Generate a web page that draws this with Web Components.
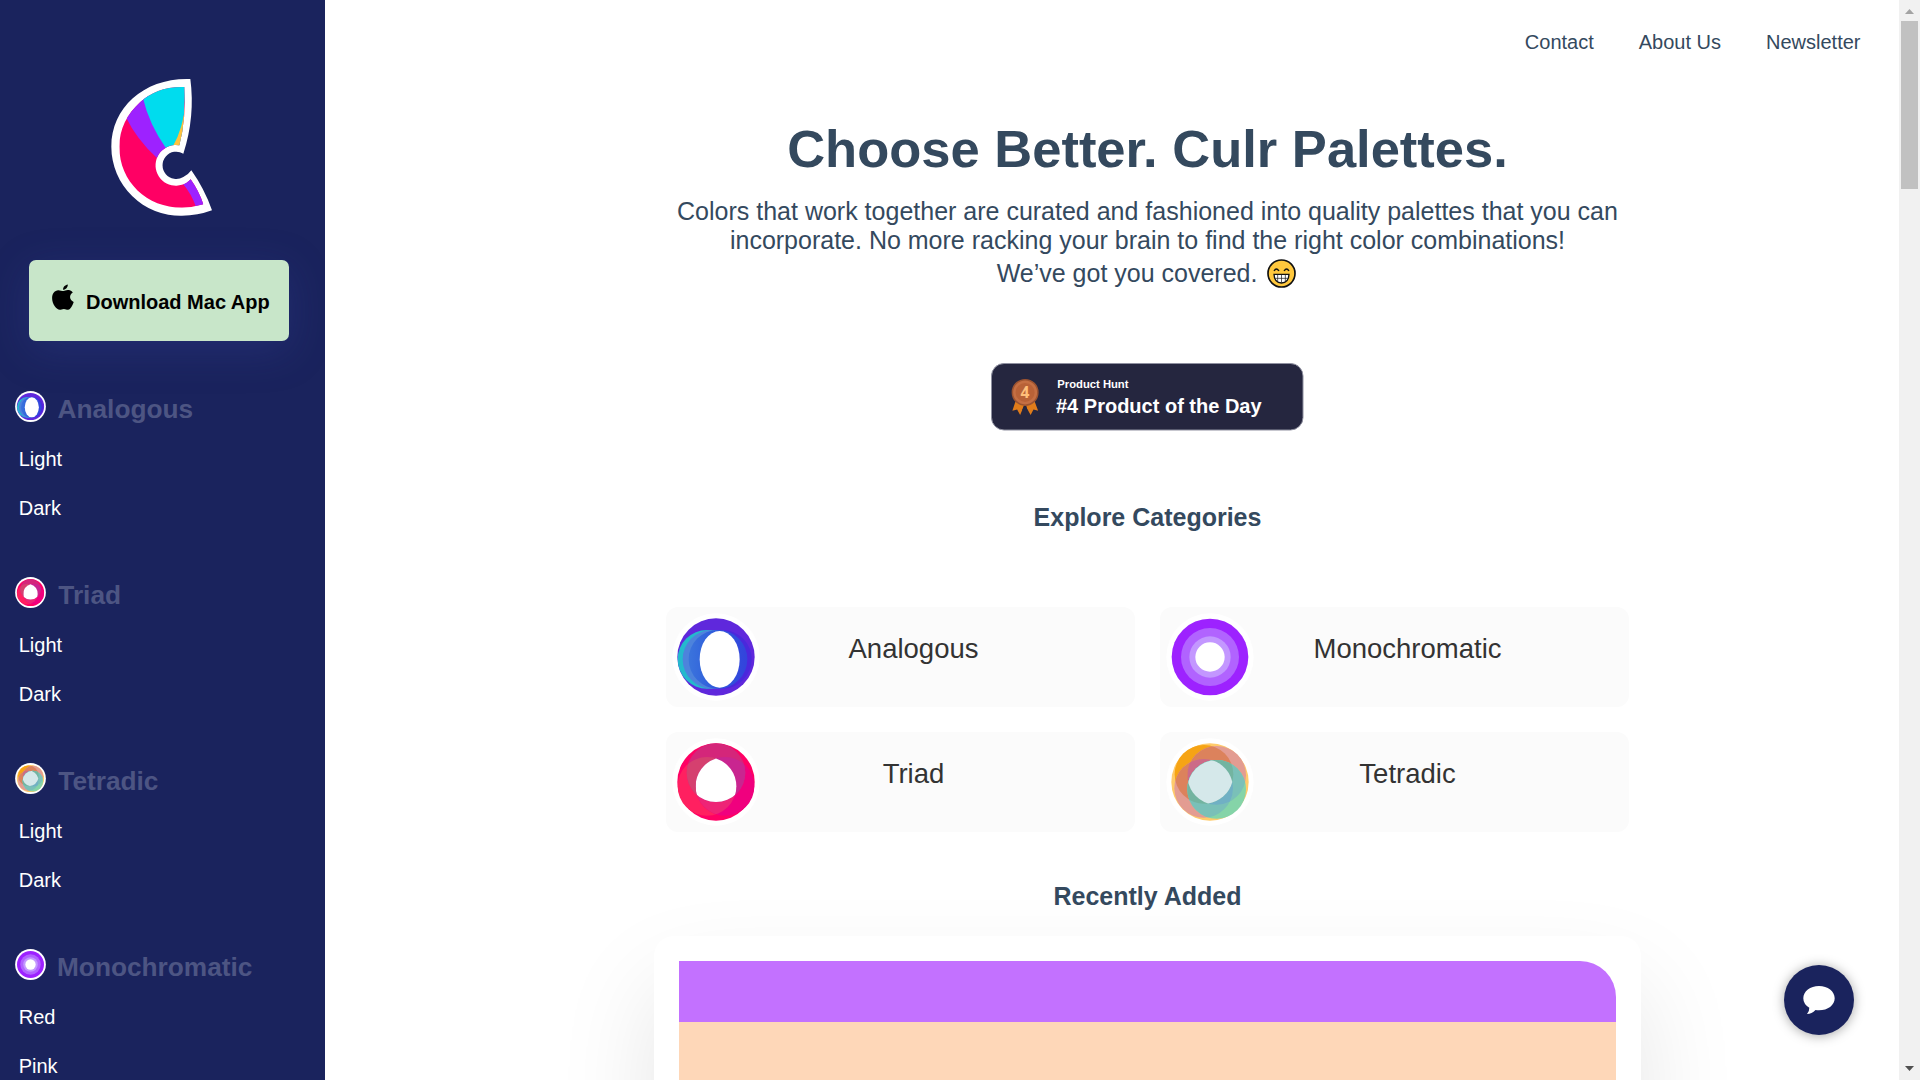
<!DOCTYPE html>
<html lang="en">
<head>
<meta charset="utf-8">
<title>Culr Palettes</title>
<style>
html,body{margin:0;height:1080px;overflow:hidden;background:#fff;font-family:"Liberation Sans",Arial,sans-serif;font-size:20px;color:#34495e}
</style>
</head>
<body>
<culr-app></culr-app>
<script>
const define = (name, html, setup) => {
  const t = document.createElement('template');
  t.innerHTML = html;
  customElements.define(name, class extends HTMLElement {
    constructor() {
      super();
      this.attachShadow({mode: 'open'}).appendChild(t.content.cloneNode(true));
    }
    connectedCallback() { if (setup) setup(this, this.shadowRoot); }
  });
};

const C = (x, y, f, clip) => `<circle cx="${x}" cy="${y}" r="88" fill="${f}"${clip ? ` clip-path="url(#${clip})"` : ''}/>`;
const clip = (id, x, y, parent) => `<clipPath id="${id}"${parent ? ` clip-path="url(#${parent})"` : ''}><circle cx="${x}" cy="${y}" r="88"/></clipPath>`;
const WHEELS = {
  analogous: `<defs><linearGradient id="g"><stop offset="0" stop-color="#3b74dc"/><stop offset=".4" stop-color="#2f5edc"/><stop offset="1" stop-color="#3343dc"/></linearGradient></defs>
    <circle cx="120" cy="120" r="116" fill="#5f28dc"/>${C(139,127,'#4a28dc')}${C(93,127,'#24b9cd')}${C(108,127,'#4d83dc')}${C(126,127,'url(#g)')}
    <ellipse cx="131" cy="127" rx="60" ry="85" fill="#fff"/>`,
  monochromatic: `<circle cx="120" cy="120" r="115" fill="#9d22ff"/><circle cx="120" cy="120" r="87" fill="#b163ff"/><circle cx="120" cy="120" r="62" fill="#c397ff"/><circle cx="120" cy="120" r="44" fill="#fff"/>`,
  triad: `<defs>${clip('l',93,133)}${clip('r',147,133)}${clip('lr',147,133,'l')}</defs>
    <circle cx="120" cy="120" r="116" fill="#ff0064"/>${C(93,133,'#ff2060')}${C(147,133,'#f0007e')}${C(147,133,'#ee2476','l')}
    ${C(120,92,'#d4267a')}${C(120,92,'#d5406f','l')}${C(120,92,'#c92590','r')}${C(120,92,'#fff','lr')}`,
  tetradic: `<defs>${clip('a',102,97)}${clip('b',140,100)}${clip('c',101,139)}${clip('ab',140,100,'a')}${clip('ac',101,139,'a')}${clip('bc',101,139,'b')}${clip('abc',101,139,'ab')}</defs>
    <circle cx="120" cy="120" r="116" fill="#ffcb6b"/>${C(102,97,'#f6a415')}${C(140,100,'#e39c92')}${C(140,100,'#dc825c','a')}
    ${C(101,139,'#e39c92')}${C(101,139,'#dc825c','a')}${C(101,139,'#dc825c','b')}${C(101,139,'#cc6b88','ab')}
    ${C(140,142,'#85d4a8')}${C(140,142,'#7ac0b8','b')}${C(140,142,'#7ac0b8','c')}${C(140,142,'#73b4a0','ab')}${C(140,142,'#70b0c4','bc')}${C(140,142,'#73b4a0','ac')}${C(140,142,'#d5e8ea','abc')}`
};

define('color-wheel', `<style>:host{display:block;flex:none;width:88px;height:88px}svg{display:block;width:100%;height:100%}</style><svg viewBox="-12 -12 264 264"></svg>`,
  (el, root) => { root.querySelector('svg').innerHTML = '<circle cx="120" cy="120" r="131" fill="#fff"/>' + (WHEELS[el.getAttribute('kind')] || ''); });

define('culr-logo', `<style>:host{display:block;width:110px;height:145px}svg{display:block}</style>
<svg width="110" height="145" viewBox="320 75 330 435">
  <defs><clipPath id="c"><path d="M552 111C495 109 453 127 420 156C380 192 357 238 357 290C357 395 440 473 545 473Q580 472 609 463Q596 423 571 388A61 61 0 1 1 537 286Q558 205 552 111Z"/></clipPath></defs>
  <path fill="#fff" d="M570 87Q585 200 549 311A41 41 0 1 0 549 381Q565 373 573 361Q612 416 635 481Q592 497 545 497A207 207 0 0 1 333 290C333 170 435 82 570 87Z"/>
  <g clip-path="url(#c)">
    <path fill="#ff0064" d="M340 90H640V490H340Z"/>
    <path fill="#9d22ff" d="M376 200Q409 268 470 324L500 295L440 130Z"/>
    <path fill="#00dcee" d="M428 145Q446 222 497 295H545L556 100H420Z"/>
    <path fill="#ffc23d" d="M556 155Q549 235 517 290H560Z"/>
    <path fill="#9d22ff" d="M545 398Q576 433 590 480L620 480L600 400L570 380Z"/>
  </g>
</svg>`);

define('download-button', `<style>:host{display:flex;align-items:flex-start;box-sizing:border-box;width:260px;height:81px;padding:24px 0 0 23px;border-radius:7px;background:#c8e6c9;color:#000;box-shadow:0 10px 40px rgba(58,77,170,.25);font:bold 20px/24px "Liberation Sans",Arial,sans-serif}
svg{flex:none;margin-right:12px}span{padding-top:6px;white-space:nowrap}</style>
<svg width="22" height="27" viewBox="0 0 22 27"><path d="M15.8.5c.1 2.7-2 5.3-4.7 5.3C10.900 3.200 13 .9 15.800.5ZM11.600 7.100c1 0 2.300-1 4.200-1 1.500 0 3.700.5 5 2.400-4 2.400-3.400 7.700.9 9.400-1 2.900-3.200 7.700-5.600 7.900-1.500.1-2.300-.9-4.200-.9s-2.700.9-4.200.9C4.800 25.700 0 20.400.1 14 .2 9.200 2.700 6.400 6.300 6.200c2 0 3.500.9 5.300.9Z"/></svg>
<span><slot></slot></span>`);

define('side-section', `<style>:host{display:flex;flex-direction:column;padding:0 0 57px 15px;--nudge:11.500px}
header{display:flex;height:32px;margin-bottom:24px}
color-wheel{width:31px;height:31px}
h3{margin:3px 0 0 var(--nudge);font-size:26.250px;line-height:30px;font-weight:bold;color:#4d5583;white-space:nowrap}
nav{display:flex;flex-direction:column;gap:25px;padding-left:3.700px;color:#fff;line-height:24px}</style>
<header><color-wheel></color-wheel><h3></h3></header><nav></nav>`,
  (el, root) => {
    const k = el.getAttribute('name');
    const w = document.createElement('color-wheel');
    w.setAttribute('kind', k.toLowerCase());
    root.querySelector('color-wheel').replaceWith(w);
    root.querySelector('h3').textContent = k;
    root.querySelector('nav').innerHTML = el.getAttribute('links').split(',').map(s => `<a>${s}</a>`).join('');
  });

define('side-bar', `<style>:host{display:flex;flex-direction:column;flex:none;width:325px;height:1080px;overflow:hidden;background:#1a235d;box-sizing:border-box;padding-top:75px}
:host>*{flex:none}
culr-logo,download-button,side-section{flex:none}
culr-logo{margin-left:106.6px}download-button{margin:40px 0 50px 29px}
.t{--nudge:12.300px}.m{--nudge:11px}</style>
<culr-logo></culr-logo>
<download-button>Download Mac App</download-button>
<side-section name="Analogous" links="Light,Dark"></side-section>
<side-section class="t" name="Triad" links="Light,Dark"></side-section>
<side-section class="t" name="Tetradic" links="Light,Dark"></side-section>
<side-section class="m" name="Monochromatic" links="Red,Pink"></side-section>`);

define('top-nav', `<style>:host{display:flex;flex:none;justify-content:flex-end;gap:45px;box-sizing:border-box;height:119px;padding:30px 38.500px 0 0;line-height:24px}</style>
<a>Contact</a><a>About Us</a><a>Newsletter</a>`);

define('grin-face', `<style>:host{display:inline-block;width:29px;height:29px;vertical-align:top;margin:0 2px 0 3px}svg{display:block}</style>
<svg width="29" height="29" viewBox="0 0 87 87"><circle cx="43.500" cy="43.500" r="40.500" fill="#ffc83d" stroke="#111" stroke-width="5"/>
<path d="M21 36Q28 24 36 36M51 36Q59 24 66 36" fill="none" stroke="#111" stroke-width="4"/>
<path d="M21 46H66Q65 72 43.500 72Q22 72 21 46Z" fill="#fff" stroke="#111" stroke-width="4"/>
<path d="M22 58H65M32 47V69M43.500 47V71M55 47V69" stroke="#222" stroke-width="2.200" fill="none"/></svg>`);

define('hunt-badge', `<style>:host{display:block;flex:none;width:312.500px;height:67.500px}svg{display:block}text{font-family:"Liberation Sans",Arial,sans-serif;font-weight:bold}.n{font-family:"Open Sans","Liberation Sans",sans-serif}</style>
<svg width="312.500" height="67.500" viewBox="0 0 250 54">
<rect x=".4" y=".4" width="249.200" height="53.200" rx="10" fill="#25263f" stroke="#8f90a0" stroke-width=".8"/>
<path d="M19.500 31L17.100 38.200L20.900 37.200L23.300 41.500L26.500 34L27.500 34L31.700 41.500L34 37.200L37.700 38.200L35 31Z" fill="#e07c1a"/><path d="M26.400 34H28.200L29 37.500H25Z" fill="#25263f"/>
<circle cx="27.300" cy="23.500" r="10.200" fill="#c56f43" stroke="#9c5330" stroke-width="1.200"/><circle cx="27.300" cy="23.500" r="7.600" fill="#b96237"/>
<text class="n" x="27.100" y="28" font-size="12.500" text-anchor="middle" fill="#ffbf7a">4</text>
<text x="53" y="20" font-size="9" fill="#fff">Product Hunt</text><text x="52" y="40" font-size="16" fill="#fff">#4 Product of the Day</text></svg>`);

define('category-card', `<style>:host{display:flex;height:100px;border-radius:12px;background:#fbfbfb;color:#333;box-sizing:border-box;padding:6px 0 0 6px}
span{flex:1;text-align:center;padding:20px 68px 0 0;font-size:27.500px;line-height:32px}</style>
<color-wheel></color-wheel><span><slot></slot></span>`, (el, root) => {
  const w = document.createElement('color-wheel');
  w.setAttribute('kind', el.getAttribute('kind'));
  root.querySelector('color-wheel').replaceWith(w);
});

define('palette-card', `<style>:host{display:block;flex:none;box-sizing:border-box;width:987px;height:420px;padding:25px;border-radius:20px;background:#fff;box-shadow:0 50px 100px rgba(0,0,0,.1)}
.p{display:flex;flex-direction:column;height:100%;border-top-right-radius:36px;overflow:hidden}.p div{height:61px;background:#c371ff}.p div+div{flex:1;background:#fed7b8}</style>
<div class="p"><div></div><div></div></div>`);

define('home-page', `<style>:host{display:flex;flex-direction:column;flex:1;height:1080px;overflow:hidden}
section{display:flex;flex:none;flex-direction:column;align-items:center;margin-left:71px;text-align:center}
h1{margin:0 0 18px;font-size:52.500px;line-height:60px;white-space:nowrap}
p{margin:0;width:963px;font-size:25px;line-height:29px}p+p{margin-top:4px}
hunt-badge{margin-top:75px}
h2{margin:72.500px 0 75px;font-size:25px;line-height:29px}
h2.r{margin:50px 0 25px;z-index:1}
.grid{display:grid;width:963px;grid-template-columns:1fr 1fr;gap:25px}</style>
<top-nav></top-nav>
<section>
<h1>Choose Better. Culr Palettes.</h1>
<p>Colors that work together are curated and fashioned into quality palettes that you can incorporate. No more racking your brain to find the right color combinations!</p>
<p>We’ve got you covered. <grin-face></grin-face></p>
<hunt-badge></hunt-badge>
<h2>Explore Categories</h2>
<div class="grid">
<category-card kind="analogous">Analogous</category-card><category-card kind="monochromatic">Monochromatic</category-card>
<category-card kind="triad">Triad</category-card><category-card kind="tetradic">Tetradic</category-card>
</div>
<h2 class="r">Recently Added</h2>
<palette-card></palette-card>
</section>`);

define('scroll-bar', `<style>:host{display:flex;flex-direction:column;align-items:center;flex:none;width:21px;height:1080px;background:#f1f1f1}
svg{flex:none}i{width:17px;height:168px;background:#c1c1c1}svg+i+svg{margin-top:auto}</style>
<svg width="21" height="21"><path d="M6 14H15L10.500 9Z" fill="#a3a3a3"/></svg><i></i><svg width="21" height="21"><path d="M6 7H15L10.500 12Z" fill="#505050"/></svg>`);

define('chat-bubble', `<style>:host{position:fixed;left:1784px;top:965px;width:70px;height:70px;border-radius:50%;background:#1a235d;box-shadow:0 1px 12px rgba(0,0,0,.35);display:flex;align-items:center;justify-content:center}</style>
<svg width="32" height="28" viewBox="0 0 32 28"><path fill="#fff" d="M16 0C24.800 0 31.700 5.300 31.700 12.200S24.800 24.300 16 24.300q-1.800 0-3.500-.4Q8.800 28 4 28Q6.500 25 6.300 21.700Q.3 18 .3 12.200C.3 5.300 7.200 0 16 0Z"/></svg>`);

define('culr-app', `<style>:host{display:flex;width:1920px;height:1080px;overflow:hidden}</style>
<side-bar></side-bar><home-page></home-page><scroll-bar></scroll-bar><chat-bubble></chat-bubble>`);
</script>
</body>
</html>
